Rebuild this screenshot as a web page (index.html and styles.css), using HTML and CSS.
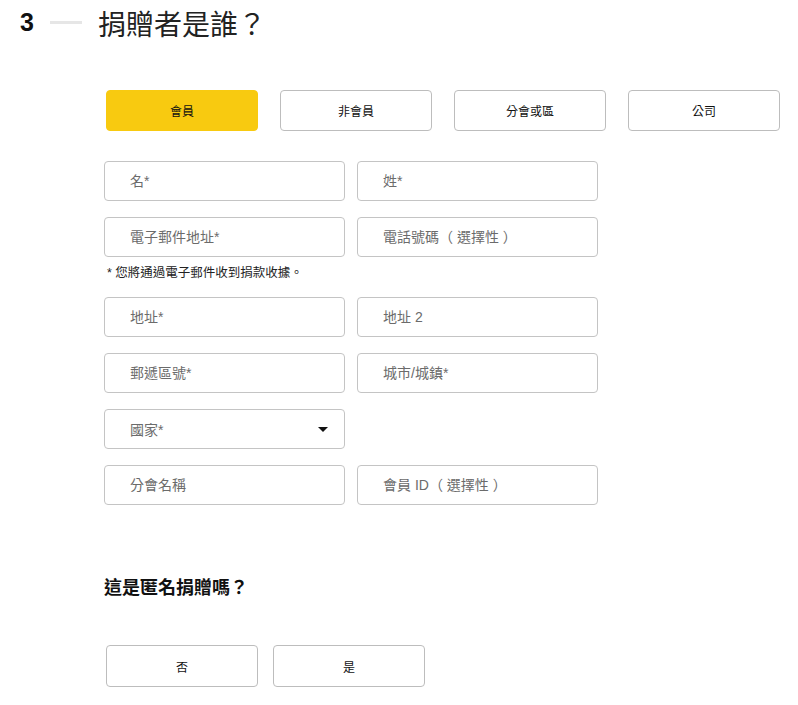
FILE: index.html
```html
<!DOCTYPE html>
<html lang="zh-Hant">

<head>
    <meta charset="UTF-8">
    <meta name="viewport" content="width=device-width, initial-scale=1.0">
    <title>捐贈者是誰？</title>
    <link rel="stylesheet" href="styles.css">
</head>

<body>
    <div class="step-header">
        <span class="step-number">3</span>
        <span class="step-line"></span>
        <h1>捐贈者是誰？</h1>
    </div>

    <div class="step-body">
        <div class="donor-types">
            <button type="button" class="choice active">會員</button>
            <button type="button" class="choice">非會員</button>
            <button type="button" class="choice">分會或區</button>
            <button type="button" class="choice">公司</button>
        </div>

        <form class="donor-form">
            <div class="form-row">
                <input type="text" placeholder="名*">
                <input type="text" placeholder="姓*">
            </div>
            <div class="form-row">
                <input type="text" placeholder="電子郵件地址*">
                <input type="text" placeholder="電話號碼（ 選擇性 ）">
            </div>
            <p class="note">* 您將通過電子郵件收到捐款收據。</p>
            <div class="form-row">
                <input type="text" placeholder="地址*">
                <input type="text" placeholder="地址 2">
            </div>
            <div class="form-row">
                <input type="text" placeholder="郵遞區號*">
                <input type="text" placeholder="城市/城鎮*">
            </div>
            <div class="form-row">
                <div class="select">
                    <span>國家*</span>
                    <span class="caret"></span>
                </div>
            </div>
            <div class="form-row">
                <input type="text" placeholder="分會名稱">
                <input type="text" placeholder="會員 ID（ 選擇性 ）">
            </div>
        </form>

        <h2>這是匿名捐贈嗎？</h2>
        <div class="yes-no">
            <button type="button" class="choice">否</button>
            <button type="button" class="choice">是</button>
        </div>
    </div>
</body>

</html>
```

FILE: styles.css
```css
* {
    box-sizing: border-box;
    margin: 0;
    padding: 0;
}

body {
    font-family: "Liberation Sans", "Noto Sans CJK TC", sans-serif;
    color: #222;
    background: #fff;
}

.step-header {
    display: flex;
    align-items: center;
    height: 45px;
    padding-left: 20px;
}

.step-number {
    font-size: 25px;
    font-weight: bold;
    color: #111;
}

.step-line {
    width: 32px;
    height: 3px;
    background: #e6e6e6;
    margin: 0 16px 0 16px;
}

.step-header h1 {
    font-size: 28px;
    font-weight: normal;
    color: #222;
}

.step-body {
    padding-left: 104px;
}

.choice {
    width: 152px;
    height: 41px;
    border: 1px solid #bdbdbd;
    border-radius: 4px;
    background: #fff;
    font-family: inherit;
    font-size: 12px;
    color: #111;
    cursor: pointer;
}

.choice.active {
    background: #f8ca10;
    border-color: #f8ca10;
}

.donor-types {
    display: flex;
    gap: 22px;
    padding-left: 2px;
    margin-top: 45px;
}

.donor-form {
    margin-top: 30px;
    display: flex;
    flex-direction: column;
    gap: 16px;
}

.form-row {
    display: flex;
    gap: 12px;
}

.form-row input,
.select {
    width: 241px;
    height: 40px;
    border: 1px solid #c4c4c4;
    border-radius: 4px;
    padding: 0 25px;
    font-family: inherit;
    font-size: 14px;
    color: #222;
    background: #fff;
}

.form-row input::placeholder {
    color: #6b6b6b;
}

.select {
    display: flex;
    align-items: center;
    justify-content: space-between;
    color: #6b6b6b;
    padding-right: 16px;
}

.caret {
    width: 0;
    height: 0;
    border-left: 5px solid transparent;
    border-right: 5px solid transparent;
    border-top: 5px solid #111;
}

.note {
    font-size: 12.5px;
    color: #222;
    margin: -11px 0 0 3px;
}

.step-body h2 {
    font-size: 18px;
    font-weight: bold;
    color: #111;
    margin-top: 68px;
}

.yes-no {
    display: flex;
    gap: 15px;
    padding-left: 2px;
    margin-top: 46px;
}

.yes-no .choice {
    height: 42px;
}
```
